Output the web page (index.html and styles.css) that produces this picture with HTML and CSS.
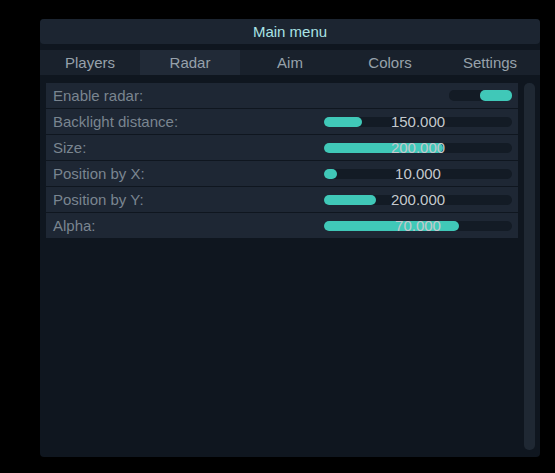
FILE: index.html
```html
<!DOCTYPE html>
<html>
<head>
<meta charset="utf-8">
<link rel="stylesheet" href="styles.css">
</head>
<body>
<div class="window">
  <div class="title">Main menu</div>
  <div class="tabs">
    <div class="tab">Players</div>
    <div class="tab active">Radar</div>
    <div class="tab">Aim</div>
    <div class="tab">Colors</div>
    <div class="tab">Settings</div>
  </div>
  <div class="content">
    <div class="rows">
      <div class="row">
        <span class="label">Enable radar:</span>
        <div class="toggle"><div class="knob"></div></div>
      </div>
      <div class="row">
        <span class="label">Backlight distance:</span>
        <div class="slider"><div class="fill" style="width:38px"></div><span class="value">150.000</span></div>
      </div>
      <div class="row">
        <span class="label">Size:</span>
        <div class="slider"><div class="fill" style="width:119px"></div><span class="value">200.000</span></div>
      </div>
      <div class="row">
        <span class="label">Position by X:</span>
        <div class="slider"><div class="fill" style="width:13px"></div><span class="value">10.000</span></div>
      </div>
      <div class="row">
        <span class="label">Position by Y:</span>
        <div class="slider"><div class="fill" style="width:52px"></div><span class="value">200.000</span></div>
      </div>
      <div class="row">
        <span class="label">Alpha:</span>
        <div class="slider"><div class="fill" style="width:135px"></div><span class="value">70.000</span></div>
      </div>
    </div>
    <div class="scrollbar"></div>
  </div>
</div>
</body>
</html>
```
FILE: styles.css
```css
* { box-sizing: border-box; }
html, body {
  margin: 0;
  padding: 0;
  background: #000;
  font-family: "Liberation Sans", Arial, sans-serif;
  font-size: 15px;
}
.window {
  margin: 19px 0 0 40px;
  width: 500px;
  height: 438px;
  background: #0f161f;
  border-radius: 4px;
  display: flex;
  flex-direction: column;
}
.title {
  height: 25px;
  line-height: 25px;
  text-align: center;
  background: #1c2531;
  color: #a9e3e5;
  border-radius: 4px;
}
.tabs {
  margin-top: 6px;
  height: 25px;
  display: grid;
  grid-template-columns: repeat(5, 1fr);
  background: #19212c;
}
.tab {
  line-height: 25px;
  text-align: center;
  color: #97a1ab;
}
.tab.active {
  background: #212a37;
}
.content {
  margin-top: 8px;
  display: flex;
  padding: 0 5px 7px 6px;
  gap: 6px;
  flex: 1;
  min-height: 0;
}
.rows {
  flex: 1;
  display: flex;
  flex-direction: column;
  gap: 1px;
  align-self: flex-start;
}
.row {
  height: 25px;
  background: #1e2734;
  display: flex;
  align-items: center;
  padding: 0 6px 0 7px;
}
.label {
  color: #7a8590;
  flex: 1;
}
.slider {
  position: relative;
  width: 188px;
  height: 10px;
  background: #131b25;
  border-radius: 5px;
}
.fill {
  height: 10px;
  background: #40c8b8;
  border-radius: 5px;
}
.value {
  position: absolute;
  left: 0;
  right: 0;
  top: -3px;
  line-height: 16px;
  text-align: center;
  color: #c4c9ce;
}
.toggle {
  width: 63px;
  height: 11px;
  background: #131b25;
  border-radius: 5px;
  display: flex;
  justify-content: flex-end;
}
.knob {
  width: 32px;
  height: 11px;
  background: #40c8b8;
  border-radius: 5px;
}
.scrollbar {
  width: 11px;
  background: #1f2833;
  border-radius: 5px;
}
```
